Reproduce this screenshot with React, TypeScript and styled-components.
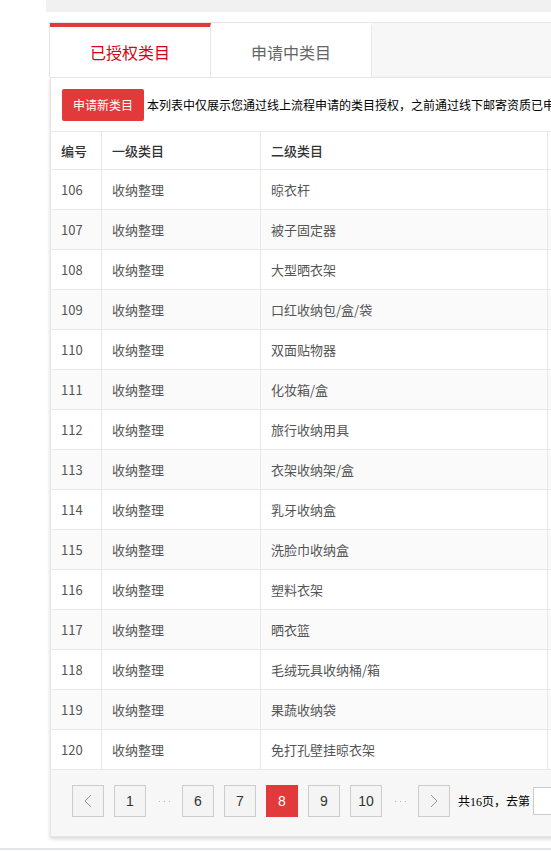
import React from "react";
import styled, { createGlobalStyle } from "styled-components";

const GlobalStyle = createGlobalStyle`
  body {
    margin: 0;
    background: #fff;
    overflow: hidden;
    font-family: "Noto Sans CJK SC", "Liberation Sans", sans-serif;
  }
`;

const StyledPage = styled.div`
  width: 1000px;
`;

const StyledTopBar = styled.div`
  margin-left: 46px;
  height: 12px;
  background: #f1f1f1;
`;

const StyledMain = styled.div`
  margin: 10px 0 0 49px;
`;

const StyledTabs = styled.div`
  display: flex;
  height: 55px;
  box-sizing: border-box;
  border-top: 1px solid #e6e6e6;
  border-left: 1px solid #e6e6e6;
  background: #f7f7f7;
`;

const StyledTab = styled.div<{ $active?: boolean }>`
  width: 161px;
  height: 54px;
  box-sizing: border-box;
  display: flex;
  align-items: center;
  justify-content: center;
  background: #fff;
  border-top: 4px solid ${(p) => (p.$active ? "#e23a3a" : "transparent")};
  border-right: 1px solid #e6e6e6;
  font-size: 16px;
  line-height: 20px;
  color: ${(p) => (p.$active ? "#d7000f" : "#666")};
`;

const StyledPanel = styled.div`
  margin-left: 1px;
  border: 1px solid #e6e6e6;
  background: #fff;
  box-shadow: 0 2px 4px rgba(0, 0, 0, 0.16);
`;

const StyledToolbar = styled.div`
  display: flex;
  align-items: center;
  height: 53px;
  padding-left: 11px;
  white-space: nowrap;
  font-size: 12px;
  color: #000;
`;

const StyledApplyButton = styled.button`
  width: 82px;
  height: 32px;
  border: none;
  border-radius: 2px;
  background: #e23a3a;
  color: #fff;
  font-family: inherit;
  font-size: 12px;
  margin-right: 3px;
  padding: 0;
`;

const StyledTable = styled.div`
  border-top: 1px solid #e8e8e8;
  font-size: 13px;
`;

const StyledRow = styled.div<{ $head?: boolean; $striped?: boolean }>`
  display: grid;
  grid-template-columns: 51px 159px 287px 1fr;
  height: ${(p) => (p.$head ? "38px" : "40px")};
  box-sizing: border-box;
  border-bottom: 1px solid #e8e8e8;
  background: ${(p) => (p.$striped ? "#fafafa" : "#fff")};
  color: ${(p) => (p.$head ? "#333" : "#555")};
  font-weight: ${(p) => (p.$head ? 500 : 400)};
`;

const StyledCell = styled.div`
  display: flex;
  align-items: center;
  padding-left: 10px;
  border-right: 1px solid #e8e8e8;
  box-sizing: border-box;
`;

const StyledPager = styled.div`
  display: flex;
  align-items: flex-start;
  height: 66px;
  box-sizing: border-box;
  padding: 15px 0 0 21px;
  background: #f7f7f7;
`;

const StyledPagerList = styled.div`
  display: flex;
  gap: 10px;
`;

const StyledPageButton = styled.div<{ $active?: boolean }>`
  width: 32px;
  height: 32px;
  box-sizing: border-box;
  display: flex;
  align-items: center;
  justify-content: center;
  border: 1px solid ${(p) => (p.$active ? "#e23a3a" : "#ccc")};
  background: ${(p) => (p.$active ? "#e23a3a" : "#f4f4f4")};
  color: ${(p) => (p.$active ? "#fff" : "#333")};
  font-family: "Liberation Sans", sans-serif;
  font-size: 14px;
`;

const StyledDots = styled.div`
  width: 16px;
  height: 32px;
  display: flex;
  align-items: center;
  justify-content: center;
  gap: 4px;
`;

const StyledDot = styled.span`
  width: 1px;
  height: 1px;
  background: #b5b5b5;
`;

const StyledInfo = styled.div`
  display: flex;
  align-items: center;
  height: 32px;
  margin-left: 8px;
  font-family: "Liberation Serif", "Noto Sans CJK SC", serif;
  font-size: 12px;
  color: #000;
`;

const StyledJump = styled.input`
  width: 40px;
  height: 28px;
  box-sizing: border-box;
  margin-left: 3px;
  border: 1px solid #ccc;
  background: #fff;
`;

const StyledFooterLine = styled.div`
  margin-top: 11px;
  height: 2px;
  background: #e3e6ea;
`;

const rows: [number, string][] = [
  [106, "晾衣杆"],
  [107, "被子固定器"],
  [108, "大型晒衣架"],
  [109, "口红收纳包/盒/袋"],
  [110, "双面贴物器"],
  [111, "化妆箱/盒"],
  [112, "旅行收纳用具"],
  [113, "衣架收纳架/盒"],
  [114, "乳牙收纳盒"],
  [115, "洗脸巾收纳盒"],
  [116, "塑料衣架"],
  [117, "晒衣篮"],
  [118, "毛绒玩具收纳桶/箱"],
  [119, "果蔬收纳袋"],
  [120, "免打孔壁挂晾衣架"],
];

const Chevron: React.FC<{ dir: "left" | "right" }> = ({ dir }) => (
  <svg width="8" height="14" viewBox="0 0 8 14">
    <polyline
      points={dir === "left" ? "7,1 1,7 7,13" : "1,1 7,7 1,13"}
      fill="none"
      stroke="#8c9aab"
      strokeWidth="1"
    />
  </svg>
);

const Dots: React.FC = () => (
  <StyledDots>
    <StyledDot />
    <StyledDot />
    <StyledDot />
  </StyledDots>
);

export default function App() {
  return (
    <StyledPage>
      <GlobalStyle />
      <StyledTopBar />
      <StyledMain>
        <StyledTabs>
          <StyledTab $active>已授权类目</StyledTab>
          <StyledTab>申请中类目</StyledTab>
        </StyledTabs>
        <StyledPanel>
          <StyledToolbar>
            <StyledApplyButton>申请新类目</StyledApplyButton>
            本列表中仅展示您通过线上流程申请的类目授权，之前通过线下邮寄资质已申请的类目不在此列表中展示
          </StyledToolbar>
          <StyledTable>
            <StyledRow $head>
              <StyledCell>编号</StyledCell>
              <StyledCell>一级类目</StyledCell>
              <StyledCell>二级类目</StyledCell>
              <StyledCell />
            </StyledRow>
            {rows.map(([id, name], i) => (
              <StyledRow key={id} $striped={i % 2 === 1}>
                <StyledCell>{id}</StyledCell>
                <StyledCell>收纳整理</StyledCell>
                <StyledCell>{name}</StyledCell>
                <StyledCell />
              </StyledRow>
            ))}
          </StyledTable>
          <StyledPager>
            <StyledPagerList>
              <StyledPageButton>
                <Chevron dir="left" />
              </StyledPageButton>
              <StyledPageButton>1</StyledPageButton>
              <Dots />
              <StyledPageButton>6</StyledPageButton>
              <StyledPageButton>7</StyledPageButton>
              <StyledPageButton $active>8</StyledPageButton>
              <StyledPageButton>9</StyledPageButton>
              <StyledPageButton>10</StyledPageButton>
              <Dots />
              <StyledPageButton>
                <Chevron dir="right" />
              </StyledPageButton>
            </StyledPagerList>
            <StyledInfo>
              共16页，去第
              <StyledJump />
            </StyledInfo>
          </StyledPager>
        </StyledPanel>
      </StyledMain>
      <StyledFooterLine />
    </StyledPage>
  );
}
